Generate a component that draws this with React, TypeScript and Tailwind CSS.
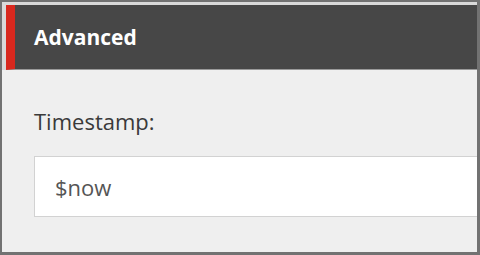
import React from "react";

export default function App() {
  return (
    <div
      className="w-[480px] h-[255px] overflow-hidden bg-[#efefef] border-[#727272] border-l-2 border-t-2 border-r-[3px] border-b-[3px] flex flex-col"
      style={{ fontFamily: '"Open Sans", "Liberation Sans", sans-serif' }}
    >
      <div className="bg-[#d9d9d9] pt-[3px] pl-[4px]">
        <div className="h-[65px] bg-[#474747] border-l-[9px] border-[#d8281e] border-b border-b-[#9a9a9a] flex items-center pl-[19px]">
          <span className="text-white font-bold text-[21px] leading-[30px]">Advanced</span>
        </div>
      </div>
      <div className="pl-[32px] pt-[36px]">
        <div className="text-[22px] leading-[30px] text-[#3a3a3a]">Timestamp:</div>
        <div className="mt-[20px] w-[480px] h-[61px] bg-white border border-[#d2d2d2] flex items-center pl-[20px]">
          <span className="text-[22px] leading-[30px] text-[#555555]">$now</span>
        </div>
      </div>
    </div>
  );
}
